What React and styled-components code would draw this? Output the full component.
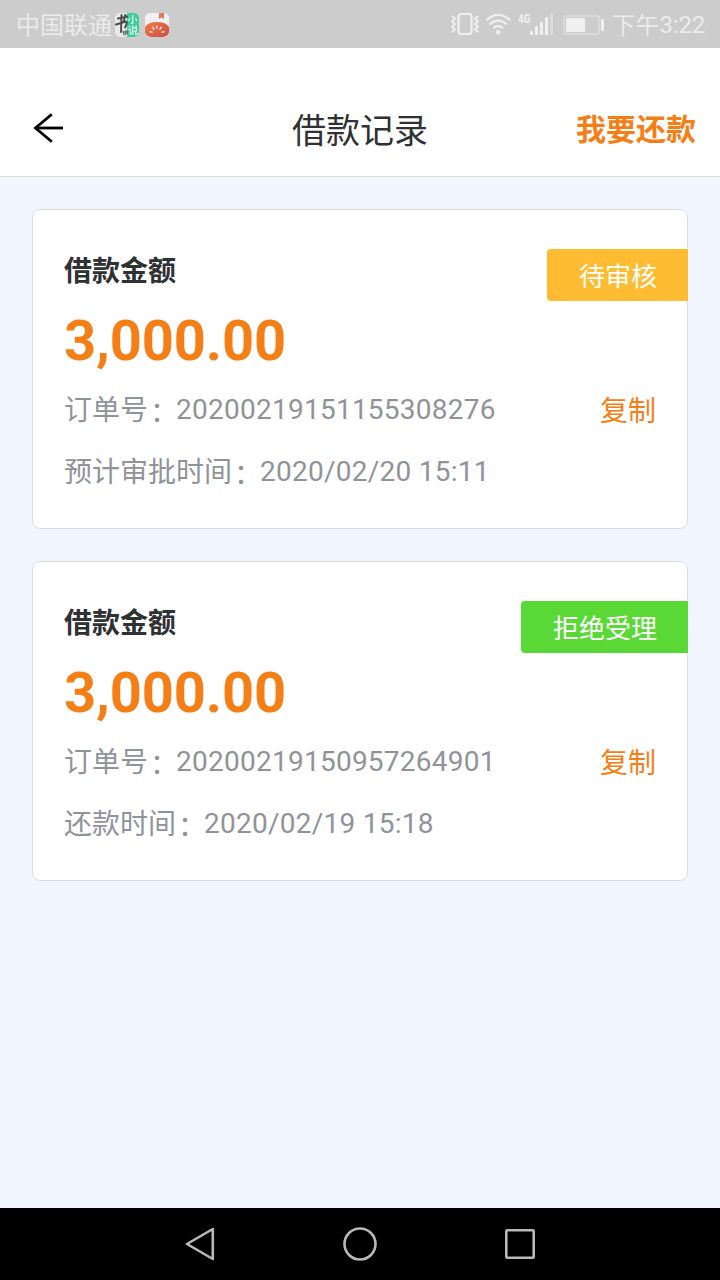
import React from "react";
import styled, { createGlobalStyle } from "styled-components";

const GlobalStyle = createGlobalStyle`
  * { box-sizing: border-box; }
  body {
    margin: 0;
    background: #f1f5fe;
    font-family: Roboto, "Noto Sans CJK SC", sans-serif;
  }
`;

const Screen = styled.div`
  display: flex;
  flex-direction: column;
  width: 720px;
  height: 1280px;
  background: #f1f5fe;
`;

const StatusBar = styled.div`
  display: flex;
  align-items: center;
  justify-content: space-between;
  flex: none;
  height: 48px;
  padding: 0 15px 0 16px;
  background: #ccc;
  color: #ececec;
  font-size: 24px;
  font-weight: 350;
  line-height: 48px;
`;

const StatusGroup = styled.div`
  display: flex;
  align-items: center;
  height: 48px;
`;

const Carrier = styled.span`
  margin-right: 3px;
  padding-top: 4px;
`;

const AppIcon = styled.svg`
  display: block;
  margin-right: 6px;
  margin-top: 2px;
`;

const StatusIcons = styled.svg`
  display: block;
`;

const Clock = styled.span`
  display: flex;
  margin-left: 7px;
  padding-top: 3px;
`;

const ClockDigits = styled.span`
  height: 48px;
  margin-top: -1px;
  font-weight: 400;
  letter-spacing: -0.2px;
`;

const Header = styled.header`
  display: grid;
  grid-template-columns: 1fr auto 1fr;
  align-items: center;
  flex: none;
  height: 129px;
  padding: 32px 24px 0 24px;
  background: #fff;
  border-bottom: 1px solid #dbdbdb;
`;

const BackButton = styled.button`
  display: flex;
  justify-self: start;
  padding: 0 0 0 8px;
  border: 0;
  background: none;
`;

const Title = styled.h1`
  margin: 0;
  padding-top: 5px;
  color: #303133;
  font-size: 34px;
  font-weight: 400;
  line-height: 48px;
`;

const RepayLink = styled.button`
  justify-self: end;
  padding: 3px 0 0;
  border: 0;
  background: none;
  color: #f57f17;
  font: inherit;
  font-size: 30px;
  font-weight: 700;
  line-height: 48px;
`;

const List = styled.main`
  display: flex;
  flex-direction: column;
  flex: 1;
  gap: 32px;
  padding: 32px;
`;

const Card = styled.article`
  position: relative;
  height: 320px;
  padding: 24px 31px;
  background: #fff;
  border: 1px solid #dcdde0;
  border-radius: 8px;
`;

const Badge = styled.div`
  position: absolute;
  top: 39px;
  right: -1px;
  height: 52px;
  padding: 2px 31px 0 32px;
  border-radius: 4px 0 0 4px;
  background: ${(p) => p.$color};
  color: #fff;
  font-size: 26px;
  line-height: 52px;
`;

const Label = styled.div`
  height: 70px;
  padding-top: 3px;
  color: #303133;
  font-size: 28px;
  font-weight: 700;
  line-height: 70px;
`;

const Amount = styled.div`
  height: 74px;
  color: #f57f17;
  font-size: 56px;
  font-weight: 700;
  letter-spacing: -0.1px;
  line-height: 74px;
`;

const Row = styled.div`
  display: flex;
  align-items: flex-start;
  justify-content: space-between;
  height: 62px;
  padding-top: 1px;
  color: #909399;
  font-size: 28px;
  line-height: 62px;
`;

const Colon = styled.span`
  padding-left: 2px;
  letter-spacing: -2px;
  vertical-align: -2px;
`;

const Value = styled.span`
  letter-spacing: 0.25px;
  vertical-align: 1px;
`;

const CopyButton = styled.button`
  padding: 2px 0 0;
  border: 0;
  background: none;
  color: #f57f17;
  font: inherit;
`;

const NavBar = styled.nav`
  display: flex;
  align-items: center;
  justify-content: center;
  gap: 120px;
  flex: none;
  height: 72px;
  background: #000;
`;

const NavIcon = styled.svg`
  display: block;
  fill: none;
  stroke: #b8b8b8;
  stroke-width: 2.6;
  stroke-linejoin: round;
`;

const records = [
  {
    status: "待审核",
    color: "#fdbc31",
    amount: "3,000.00",
    order: "20200219151155308276",
    timeLabel: "预计审批时间",
    time: "2020/02/20 15:11",
  },
  {
    status: "拒绝受理",
    color: "#5ad835",
    amount: "3,000.00",
    order: "20200219150957264901",
    timeLabel: "还款时间",
    time: "2020/02/19 15:18",
  },
];

function NovelIcon() {
  return (
    <AppIcon width="24" height="24" viewBox="0 0 24 24">
      <defs>
        <clipPath id="novel"><rect width="24" height="24" rx="5" /></clipPath>
      </defs>
      <g clipPath="url(#novel)">
        <rect width="24" height="24" fill="#e9e9e9" />
        <rect x="12" width="12" height="24" fill="#3fcb9c" />
        <g fill="none" stroke="#4a4a4a" strokeWidth="1.9" strokeLinecap="round">
          <path d="M3 5.5L10 4L8.5 9M1 11.5L11 8.5Q13 9 10 14.5M6.5 2L6 19M10 2L12 4" />
          <path d="M8 18l1 4M10.3 18h2v2h-2zM10 22l2-2" strokeWidth="1" />
        </g>
        <g fill="none" stroke="#e4fff5" strokeWidth="1.1">
          <path d="M17.8 2v8.5l-2-.8M15 5l-1.5 3M20.5 5l1.5 3" />
          <path d="M14 13l1.4 1.3M13.3 16.4h2v4.3l1.3-1M17.3 12.5l1 2M21.5 12.5l-1 2M17.5 15h4v3h-4zM18.3 18q0 3-1.7 3.7M20.6 18v3.3h2v-1.5" />
        </g>
      </g>
    </AppIcon>
  );
}

function TomatoIcon() {
  return (
    <AppIcon width="24" height="24" viewBox="0 0 24 24">
      <defs>
        <clipPath id="tomato"><rect width="24" height="24" rx="5" /></clipPath>
        <linearGradient id="tomatoFill" x1="0" y1="0" x2="1" y2="1">
          <stop offset="0" stopColor="#f17c48" />
          <stop offset="1" stopColor="#cf4a40" />
        </linearGradient>
      </defs>
      <g clipPath="url(#tomato)">
        <rect width="24" height="24" fill="#f0f0f0" />
        <path d="M14 0h5v6l-2.5-1.5L14 6z" fill="#e27959" />
        <path d="M0 14Q3 9 12 9T24 14V20Q22 24 17 24H7Q2 24 0 20z" fill="url(#tomatoFill)" />
        <path
          d="M12 13v2.2M7.5 14.2l1.5 2M16.5 14.2l-1.5 2M5 18.8l2 .4M19 18.8l-2 .4"
          stroke="#fff1e9" strokeWidth="1.4" strokeLinecap="round"
        />
      </g>
    </AppIcon>
  );
}

function DeviceIcons() {
  return (
    <StatusIcons width="155" height="48" viewBox="450 0 155 48">
      <g fill="none" stroke="#f0f0f0">
        <rect x="458.5" y="14" width="13" height="20" rx="2.5" strokeWidth="2.2" />
        <path
          d="M452 16l3 2.7-3 2.7 3 2.7-3 2.7 3 2.7-3 2.7M478 16l-3 2.7 3 2.7-3 2.7 3 2.7-3 2.7 3 2.7"
          strokeWidth="1.9"
        />
        <path
          d="M486.3 20.2Q498 9.5 510.3 20.2M489.6 24.4Q498 16.8 506.8 24.4M493.3 28.2Q498 24.2 503 28.2"
          strokeWidth="2.2"
        />
      </g>
      <circle cx="498.2" cy="32.3" r="2.3" fill="#f0f0f0" />
      <text
        x="518" y="23" fill="#f0f0f0" fontSize="13.5" fontWeight="700"
        fontFamily="Roboto, sans-serif" textLength="12.5" lengthAdjust="spacingAndGlyphs"
      >4G</text>
      <g fill="#f0f0f0">
        <rect x="530" y="31" width="3" height="4" rx="1" />
        <rect x="535" y="26" width="3" height="9" rx="1" />
        <rect x="540" y="22" width="3" height="13" rx="1" />
        <rect x="545" y="17" width="3" height="18" rx="1" />
        <rect x="550" y="13" width="3" height="22" rx="1" fill="#dadada" />
        <rect x="566" y="18" width="19" height="14" rx="1" />
        <rect x="601" y="19" width="3" height="12" rx="1.2" />
      </g>
      <rect x="564" y="16" width="35" height="18" rx="2.5" fill="none" stroke="#dedede" strokeWidth="1.6" />
    </StatusIcons>
  );
}

function RecordCard({ record }) {
  return (
    <Card>
      <Badge $color={record.color}>{record.status}</Badge>
      <Label>借款金额</Label>
      <Amount>{record.amount}</Amount>
      <Row>
        <span>订单号<Colon>：</Colon><Value>{record.order}</Value></span>
        <CopyButton>复制</CopyButton>
      </Row>
      <Row>
        <span>{record.timeLabel}<Colon>：</Colon><Value>{record.time}</Value></span>
      </Row>
    </Card>
  );
}

export default function App() {
  return (
    <Screen>
      <GlobalStyle />
      <StatusBar>
        <StatusGroup>
          <Carrier>中国联通</Carrier>
          <NovelIcon />
          <TomatoIcon />
        </StatusGroup>
        <StatusGroup>
          <DeviceIcons />
          <Clock>下午<ClockDigits>3:22</ClockDigits></Clock>
        </StatusGroup>
      </StatusBar>
      <Header>
        <BackButton aria-label="返回">
          <svg width="32" height="32" viewBox="0 0 32 32" fill="none" stroke="#000" strokeWidth="2.8">
            <path d="M31 16H4" />
            <path d="M19.8 2.2L3.5 16L19.8 29.8" />
          </svg>
        </BackButton>
        <Title>借款记录</Title>
        <RepayLink>我要还款</RepayLink>
      </Header>
      <List>
        {records.map((record) => (
          <RecordCard key={record.order} record={record} />
        ))}
      </List>
      <NavBar>
        <NavIcon width="40" height="40" viewBox="0 0 40 40">
          <path d="M7 20L32.8 5V35z" />
        </NavIcon>
        <NavIcon width="40" height="40" viewBox="0 0 40 40">
          <circle cx="20" cy="20" r="15.5" />
        </NavIcon>
        <NavIcon width="40" height="40" viewBox="0 0 40 40">
          <rect x="6.3" y="6.3" width="27.4" height="27.4" rx="1" />
        </NavIcon>
      </NavBar>
    </Screen>
  );
}
